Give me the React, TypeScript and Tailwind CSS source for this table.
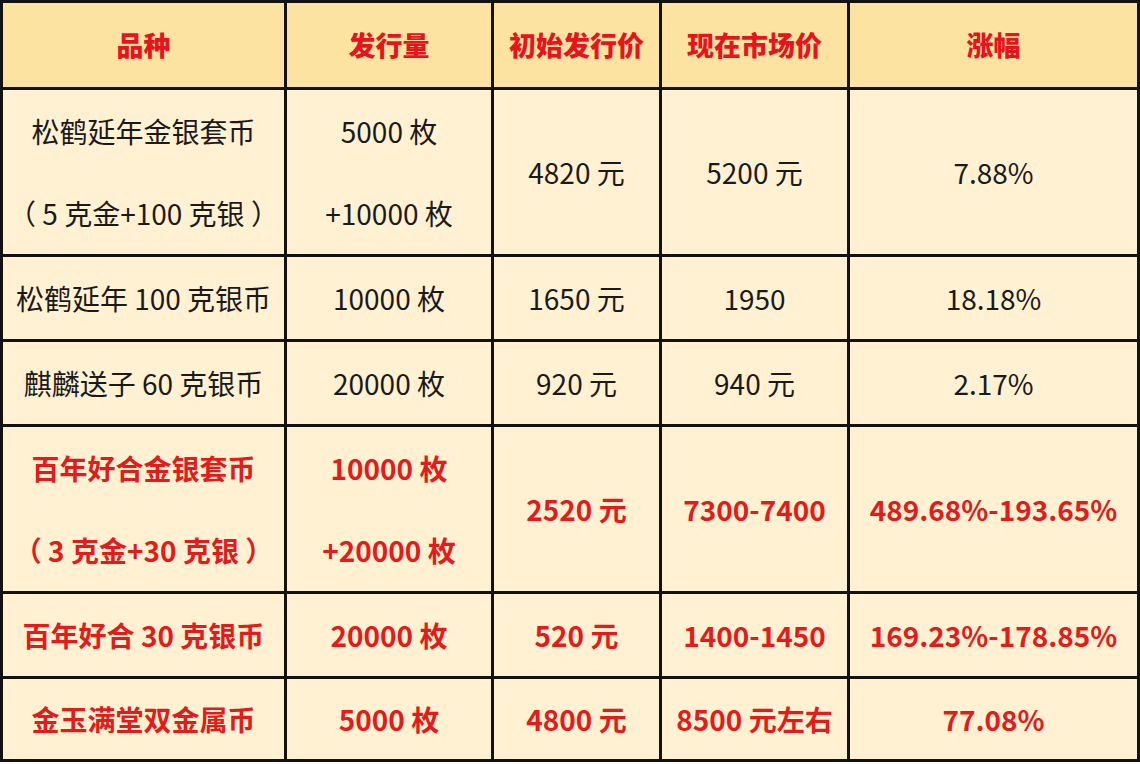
const headers = ["品种", "发行量", "初始发行价", "现在市场价", "涨幅"];

type Row = { cells: string[][]; red?: boolean; h: string };

const rows: Row[] = [
  { h: "h-[164px]", cells: [["松鹤延年金银套币", "（ 5 克金+100 克银 ）"], ["5000 枚", "+10000 枚"], ["4820 元"], ["5200 元"], ["7.88%"]] },
  { h: "h-[82px]", cells: [["松鹤延年 100 克银币"], ["10000 枚"], ["1650 元"], ["1950"], ["18.18%"]] },
  { h: "h-[82px]", cells: [["麒麟送子 60 克银币"], ["20000 枚"], ["920 元"], ["940 元"], ["2.17%"]] },
  { h: "h-[164px]", red: true, cells: [["百年好合金银套币", "（ 3 克金+30 克银 ）"], ["10000 枚", "+20000 枚"], ["2520 元"], ["7300-7400"], ["489.68%-193.65%"]] },
  { h: "h-[82px]", red: true, cells: [["百年好合 30 克银币"], ["20000 枚"], ["520 元"], ["1400-1450"], ["169.23%-178.85%"]] },
  { h: "h-[80px]", red: true, cells: [["金玉满堂双金属币"], ["5000 枚"], ["4800 元"], ["8500 元左右"], ["77.08%"]] },
];

export default function App() {
  return (
    <div className="w-[1140px] h-[764px] bg-white font-['Noto_Sans_CJK_SC',sans-serif]">
      <div className="grid grid-cols-[281px_204px_165px_185px_287px] gap-[3px] p-[3px] bg-[#141210]">
        {headers.map((t) => (
          <div key={t} className="h-[84px] bg-[#fde3a2] flex items-center justify-center text-[27px] font-black text-[#e8141c]">
            {t}
          </div>
        ))}
        {rows.map((r, i) =>
          r.cells.map((lines, j) => (
            <div
              key={`${i}-${j}`}
              className={`${r.h} bg-[#fff1d2] flex flex-col items-center justify-center ${
                r.red ? "text-[28px] font-bold text-[#e31b1b]" : "text-[28px] text-[#1a1a1a]"
              }`}
            >
              {lines.map((l) => (
                <span key={l} className="leading-[82px] whitespace-nowrap">
                  {l}
                </span>
              ))}
            </div>
          ))
        )}
      </div>
    </div>
  );
}
